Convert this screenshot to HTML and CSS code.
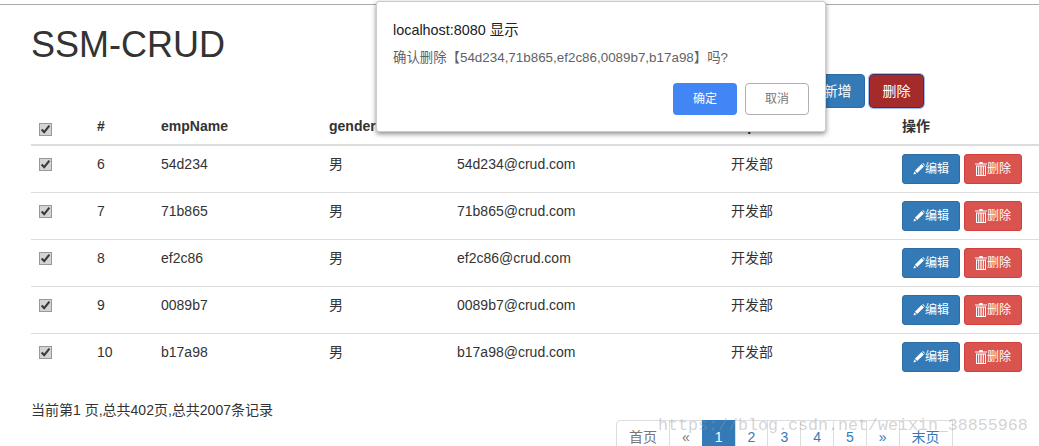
FILE: index.html
```html
<!DOCTYPE html>
<html lang="zh">
<head>
<meta charset="utf-8">
<title>SSM-CRUD</title>
<link rel="stylesheet" href="styles.css">
</head>
<body>
<svg class="defs" width="0" height="0" aria-hidden="true">
  <symbol id="pencil" viewBox="0 0 12 12">
    <path d="M8.6 1.1 10.9 3.4 4.2 10.1 1.9 7.8Z M1.4 8.6 3.4 10.6 0.4 11.6Z M9.3.5 10 .1 11.9 2 11.5 2.7Z"/>
  </symbol>
  <symbol id="trash" viewBox="0 0 12 14">
    <path fill-rule="evenodd" d="M4.5 0h3l.5 1.5H12v1H0v-1h4ZM1 3.5h10V14H1ZM2 4.5V13h1.2V4.5ZM4.2 4.5V13h1.2V4.5ZM6.6 4.5V13h1.2V4.5ZM8.9 4.5V13H10V4.5Z"/>
  </symbol>
</svg>
<div class="topline"></div>
<main class="page">
  <h1 class="title">SSM-CRUD</h1>
  <div class="actions">
    <button class="btn btn-primary">新增</button>
    <button class="btn btn-danger-focus">删除</button>
  </div>
  <table class="grid">
    <colgroup>
      <col class="c1"><col class="c2"><col class="c3"><col class="c4"><col class="c5"><col class="c6"><col class="c7">
    </colgroup>
    <thead>
      <tr>
        <th><input type="checkbox" checked></th>
        <th>#</th><th>empName</th><th>gender</th><th>email</th><th>deptName</th><th>操作</th>
      </tr>
    </thead>
    <tbody>
      <tr>
        <td><input type="checkbox" checked></td><td>6</td><td>54d234</td><td>男</td><td>54d234@crud.com</td><td>开发部</td>
        <td class="ops"><button class="btn-sm edit"><svg class="ico"><use href="#pencil"/></svg>编辑</button><button class="btn-sm del"><svg class="ico-trash"><use href="#trash"/></svg>删除</button></td>
      </tr>
      <tr>
        <td><input type="checkbox" checked></td><td>7</td><td>71b865</td><td>男</td><td>71b865@crud.com</td><td>开发部</td>
        <td class="ops"><button class="btn-sm edit"><svg class="ico"><use href="#pencil"/></svg>编辑</button><button class="btn-sm del"><svg class="ico-trash"><use href="#trash"/></svg>删除</button></td>
      </tr>
      <tr>
        <td><input type="checkbox" checked></td><td>8</td><td>ef2c86</td><td>男</td><td>ef2c86@crud.com</td><td>开发部</td>
        <td class="ops"><button class="btn-sm edit"><svg class="ico"><use href="#pencil"/></svg>编辑</button><button class="btn-sm del"><svg class="ico-trash"><use href="#trash"/></svg>删除</button></td>
      </tr>
      <tr>
        <td><input type="checkbox" checked></td><td>9</td><td>0089b7</td><td>男</td><td>0089b7@crud.com</td><td>开发部</td>
        <td class="ops"><button class="btn-sm edit"><svg class="ico"><use href="#pencil"/></svg>编辑</button><button class="btn-sm del"><svg class="ico-trash"><use href="#trash"/></svg>删除</button></td>
      </tr>
      <tr>
        <td><input type="checkbox" checked></td><td>10</td><td>b17a98</td><td>男</td><td>b17a98@crud.com</td><td>开发部</td>
        <td class="ops"><button class="btn-sm edit"><svg class="ico"><use href="#pencil"/></svg>编辑</button><button class="btn-sm del"><svg class="ico-trash"><use href="#trash"/></svg>删除</button></td>
      </tr>
    </tbody>
  </table>
  <div class="footer">
    <p class="info">当前第1 页,总共402页,总共2007条记录</p>
    <ul class="pagination">
      <li class="muted">首页</li><li class="muted">«</li><li class="active">1</li><li>2</li><li>3</li><li>4</li><li>5</li><li>»</li><li>末页</li>
    </ul>
  </div>
</main>
<div class="dialog" role="dialog">
  <div class="dialog-title">localhost:8080 显示</div>
  <div class="dialog-msg">确认删除【54d234,71b865,ef2c86,0089b7,b17a98】吗?</div>
  <div class="dialog-actions">
    <button class="dlg-btn ok">确定</button>
    <button class="dlg-btn cancel">取消</button>
  </div>
</div>
<div class="watermark">https://blog.csdn.net/weixin_38855968</div>
</body>
</html>
```
FILE: styles.css
```css
* { box-sizing: border-box; }
html, body { height: 446px; overflow: hidden; }
body {
  margin: 0;
  position: relative;
  background: #fff;
  color: #333;
  font: 14px/20px "Liberation Sans", "Noto Sans CJK SC", sans-serif;
}
.defs { position: absolute; }
.topline { height: 1px; margin-top: 4px; background: #aaa; }
.page { padding-left: 31px; }
.title {
  margin: 20px 0 0;
  height: 49px;
  font-size: 36px;
  font-weight: 500;
  line-height: 40px;
}
.actions {
  display: flex;
  justify-content: flex-end;
  gap: 4px;
  padding-right: 115px;
  height: 34px;
}
.btn {
  width: 55px;
  height: 34px;
  padding: 0;
  border: 1px solid #2e6da4;
  border-radius: 4px;
  color: #fff;
  font: inherit;
}
.btn-primary { background: #337ab7; }
.btn-danger-focus {
  background: #a52a2a;
  border: 1px solid #4a2a60;
  outline: 1px solid #9dbdf5;
  color: #fff;
}
.grid {
  width: 1008px;
  table-layout: fixed;
  border-collapse: collapse;
}
.c1 { width: 58px; }
.c2 { width: 64px; }
.c3 { width: 168px; }
.c4 { width: 128px; }
.c5 { width: 274px; }
.c6 { width: 171px; }
.c7 { width: 145px; }
.grid th, .grid td {
  padding: 8px;
  text-align: left;
  vertical-align: top;
}
.grid th { border-bottom: 2px solid #ddd; font-weight: 700; }
.grid td { border-bottom: 1px solid #ddd; }
.grid tr:last-child td { border-bottom: 0; }
.grid input {
  display: block;
  width: 13px;
  height: 13px;
  margin: 4px 0 0;
  accent-color: #d4d4d4;
  outline: 1px solid #999;
  outline-offset: -1px;
  border-radius: 2px;
}
.grid th input { margin-top: 7px; }
.ops { white-space: nowrap; }
.btn-sm {
  display: inline-flex;
  align-items: center;
  justify-content: center;
  width: 58px;
  height: 30px;
  padding: 0;
  border: 1px solid;
  border-radius: 3px;
  color: #fff;
  font: 12px/18px "Liberation Sans", "Noto Sans CJK SC", sans-serif;
  vertical-align: top;
}
.edit { background: #337ab7; border-color: #2e6da4; margin-right: 4px; }
.del { background: #d9534f; border-color: #d43f3a; }
.ico { width: 12px; height: 12px; fill: #fff; flex: none; }
.ico-trash { width: 12px; height: 14px; fill: #fff; flex: none; }
.footer { position: relative; }
.info { margin: 0; padding-top: 20px; height: 40px; }
.pagination {
  display: flex;
  list-style: none;
  margin: 0 0 0 585px;
  padding: 0;
  width: 340px;
}
.pagination li {
  flex: none;
  height: 34px;
  padding: 6px 12px;
  margin-left: -1px;
  border: 1px solid #ddd;
  color: #337ab7;
  background: #fff;
}
.pagination li:first-child { margin-left: 0; border-top-left-radius: 4px; }
.pagination .muted { color: #777; }
.pagination .active {
  background: #337ab7;
  border-color: #337ab7;
  color: #fff;
}
.dialog {
  position: absolute;
  left: 376px;
  top: 1px;
  width: 450px;
  height: 131px;
  padding: 18px 16px 0 16px;
  background: #fff;
  border: 1px solid #ccc;
  border-radius: 3px;
  box-shadow: 0 2px 5px rgba(0,0,0,.45);
}
.dialog-title { color: #202124; font-size: 14.4px; line-height: 20px; }
.dialog-msg { margin-top: 9px; color: #5f6368; font-size: 13.4px; line-height: 18px; }
.dialog-actions {
  display: flex;
  justify-content: flex-end;
  gap: 8px;
  margin-top: 16px;
}
.dlg-btn {
  width: 64px;
  height: 32px;
  padding: 0;
  border-radius: 4px;
  font: 12px/18px "Liberation Sans", "Noto Sans CJK SC", sans-serif;
}
.ok { background: #4285f4; border: 0; color: #fff; }
.cancel { background: #fff; border: 1px solid #b0b0b0; color: #777; }
.watermark {
  position: absolute;
  left: 658px;
  top: 416px;
  color: rgba(150,150,150,.42);
  font: 16.67px/20px "Liberation Mono", monospace;
  white-space: nowrap;
  pointer-events: none;
}
```
